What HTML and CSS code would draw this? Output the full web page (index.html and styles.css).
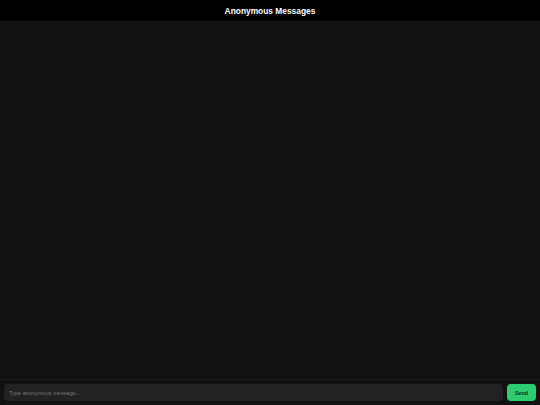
FILE: index.html
```html
<!DOCTYPE html>
<html>
<head>
<meta charset="utf-8">
<link rel="stylesheet" href="styles.css">
</head>
<body>
<div class="app">
  <header class="header">Anonymous Messages</header>
  <main class="messages"></main>
  <footer class="composer">
    <input class="input" type="text" placeholder="Type anonymous message...">
    <button class="send">Send</button>
  </footer>
</div>
</body>
</html>
```
FILE: styles.css
```css
html, body {
  margin: 0;
  padding: 0;
  height: 100%;
  background: #111111;
  font-family: "Liberation Sans", Arial, sans-serif;
}
.app {
  display: flex;
  flex-direction: column;
  height: 100vh;
}
.header {
  height: 22px;
  flex: none;
  background: #000000;
  color: #ffffff;
  font-weight: bold;
  font-size: 8.4px;
  display: flex;
  align-items: center;
  justify-content: center;
  box-sizing: border-box;
  border-bottom: 1px solid #1a1a1a;
}
.messages {
  flex: 1;
  background: #111111;
}
.composer {
  flex: none;
  display: flex;
  gap: 4px;
  padding: 4px;
  border-top: 1px solid #1c1c1c;
  background: #111111;
}
.input {
  flex: 1;
  height: 17px;
  box-sizing: border-box;
  border: none;
  border-radius: 4px;
  background: #222222;
  color: #ddd;
  font-family: "Liberation Sans", Arial, sans-serif;
  font-size: 5.6px;
  padding: 0 5px;
  outline: none;
}
.input::placeholder {
  color: #777777;
}
.send {
  flex: none;
  width: 29px;
  height: 17px;
  border: none;
  border-radius: 4px;
  background: #2ecc71;
  color: #0a2a14;
  font-family: "Liberation Sans", Arial, sans-serif;
  font-weight: bold;
  font-size: 5.3px;
  padding: 0;
}
```
